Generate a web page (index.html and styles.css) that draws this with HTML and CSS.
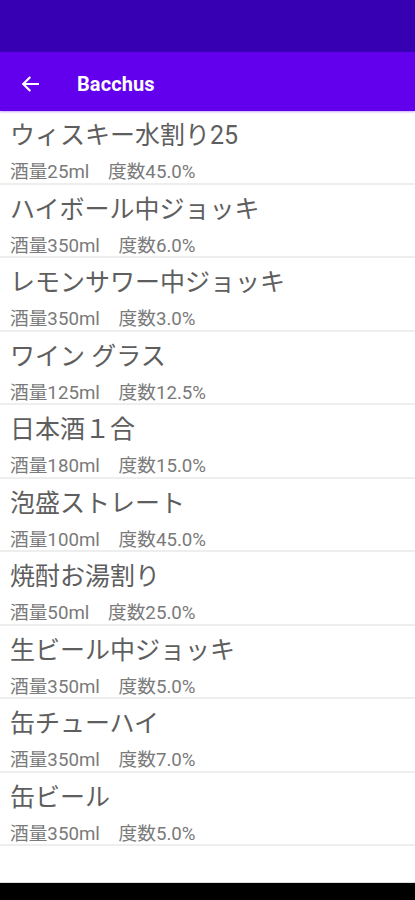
FILE: index.html
```html
<!DOCTYPE html>
<html lang="ja">
<head>
<meta charset="utf-8">
<title>Bacchus</title>
<link rel="stylesheet" href="styles.css">
</head>
<body>
<div class="screen">
  <div class="status-bar"></div>
  <header class="app-bar">
    <svg class="back" width="18" height="16" viewBox="0 0 18 16" aria-hidden="true">
      <path d="M17 8H2.5M8.5 1.8L2.3 8l6.2 6.2" fill="none" stroke="#fff" stroke-width="2.2" stroke-linecap="square"/>
    </svg>
    <h1 class="app-title">Bacchus</h1>
  </header>
  <ul class="list">
    <li class="item"><div class="name">ウィスキー水割り25</div><div class="detail">酒量25ml　度数45.0%</div></li>
    <li class="item"><div class="name">ハイボール中ジョッキ</div><div class="detail">酒量350ml　度数6.0%</div></li>
    <li class="item"><div class="name">レモンサワー中ジョッキ</div><div class="detail">酒量350ml　度数3.0%</div></li>
    <li class="item"><div class="name">ワイン グラス</div><div class="detail">酒量125ml　度数12.5%</div></li>
    <li class="item"><div class="name">日本酒１合</div><div class="detail">酒量180ml　度数15.0%</div></li>
    <li class="item"><div class="name">泡盛ストレート</div><div class="detail">酒量100ml　度数45.0%</div></li>
    <li class="item"><div class="name">焼酎お湯割り</div><div class="detail">酒量50ml　度数25.0%</div></li>
    <li class="item"><div class="name">生ビール中ジョッキ</div><div class="detail">酒量350ml　度数5.0%</div></li>
    <li class="item"><div class="name">缶チューハイ</div><div class="detail">酒量350ml　度数7.0%</div></li>
    <li class="item"><div class="name">缶ビール</div><div class="detail">酒量350ml　度数5.0%</div></li>
  </ul>
  <div class="nav-bar"></div>
</div>
</body>
</html>
```
FILE: styles.css
```css
html, body {
  margin: 0;
  padding: 0;
  background: #fff;
}
.screen {
  width: 415px;
  height: 900px;
  display: flex;
  flex-direction: column;
  overflow: hidden;
  font-family: Roboto, "Noto Sans CJK JP", sans-serif;
}
.status-bar {
  height: 52px;
  background: #3700b3;
  flex: none;
}
.app-bar {
  height: 59px;
  background: #6200ee;
  flex: none;
  display: flex;
  align-items: center;
  box-shadow: 0 1px 2px rgba(98, 0, 238, 0.35);
  position: relative;
  z-index: 1;
}
.back {
  margin-left: 21px;
  margin-top: 4px;
}
.app-title {
  margin: 4px 0 0 38px;
  font-size: 20px;
  font-weight: 700;
  color: #fff;
  letter-spacing: 0.1px;
}
.list {
  list-style: none;
  margin: 0;
  padding: 0;
  flex: 1;
}
.item {
  height: 71.5px;
  border-bottom: 2px solid #eeeeee;
  padding-left: 10px;
  box-sizing: content-box;
}
.name {
  padding-top: 10px;
  font-size: 25px;
  line-height: 30px;
  color: #5e5e5e;
}
.detail {
  margin-top: 9px;
  font-size: 18.7px;
  line-height: 24px;
  color: #7a7a7a;
}
.nav-bar {
  height: 17px;
  flex: none;
  background: #000;
  border-top: 1px solid #ddd;
}
```
